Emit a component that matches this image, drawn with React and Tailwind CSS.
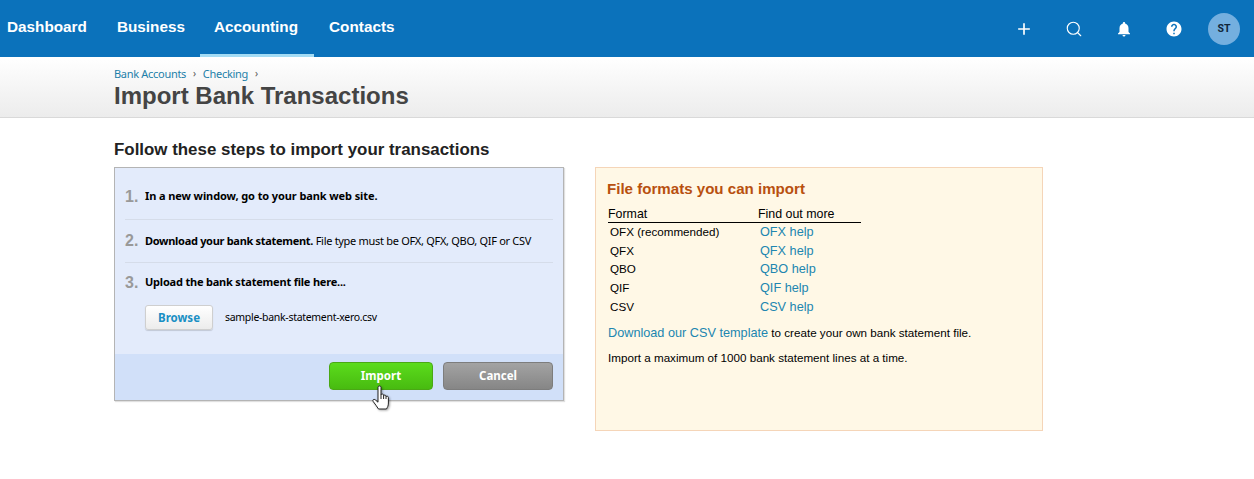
import React from 'react';
import { Search } from 'lucide-react';
import { MdAdd, MdNotifications, MdHelp } from 'react-icons/md';

const navItems = ['Dashboard', 'Business', 'Accounting', 'Contacts'];

const formats = [
  ['OFX (recommended)', 'OFX help'],
  ['QFX', 'QFX help'],
  ['QBO', 'QBO help'],
  ['QIF', 'QIF help'],
  ['CSV', 'CSV help'],
];

const arial = "font-['Liberation_Sans',Arial,sans-serif]";
const tahoma = "font-['Noto_Sans',Tahoma,sans-serif]";

function App() {
  return (
    <div className={`w-full min-h-[479px] bg-white overflow-hidden ${arial}`}>
      {/* Top nav */}
      <header className="h-[57px] bg-[#0b72bb] flex justify-between text-white">
        <nav className="flex pl-[7px] gap-[30px] text-[15.3px] font-bold">
          {navItems.map((item) => (
            <a
              key={item}
              className={
                item === 'Accounting'
                  ? 'h-[57px] -ml-[15px] -mr-[15px] pl-[14px] pr-[16px] pt-[18px] leading-[18px] border-b-[3px] border-[#a3dcf5]'
                  : 'h-[57px] pt-[18px] leading-[18px]'
              }
            >
              {item}
            </a>
          ))}
        </nav>
        <div className="flex items-center pr-[14px]">
          <MdAdd size={20} className="mr-[31px]" />
          <Search size={18} strokeWidth={1.5} className="mr-[32px]" />
          <MdNotifications size={18} className="mr-[32px]" />
          <MdHelp size={18} className="mr-[25px]" />
          <div className="w-8 h-8 rounded-full bg-[#74afdf] text-[#10263a] text-[10.5px] font-bold flex items-center justify-center font-['Roboto',sans-serif]">
            ST
          </div>
        </div>
      </header>

      {/* Page title */}
      <div className="h-[61px] pl-[114px] pt-[10px] bg-gradient-to-b from-white to-[#ececec] border-b border-[#d9d9d9]">
        <div className={`flex items-center text-[11px] leading-[13px] text-[#1d7fa9] ${tahoma} tracking-[-0.3px]`}>
          <a>Bank Accounts</a>
          <span className="mx-[7px] text-[#555] text-[10px]">›</span>
          <a>Checking</a>
          <span className="mx-[7px] text-[#555] text-[10px]">›</span>
        </div>
        <h1 className="mt-[2px] text-[24px] leading-[28px] font-bold text-[#444444]">Import Bank Transactions</h1>
      </div>

      <main className="pl-[114px] pt-[22px]">
        <h2 className="text-[16.9px] leading-[20px] font-bold text-[#222222] mb-[7px]">
          Follow these steps to import your transactions
        </h2>
        <div className="flex gap-[31px] items-start">
          {/* Steps panel */}
          <div className="relative w-[450px] h-[234px] border border-[#b4b4b4] bg-[#e3ebfb] shadow-[1px_1px_1px_rgba(0,0,0,0.12)] flex flex-col">
            <div className={`flex-1 px-[10px] ${tahoma} text-[11px] text-black`}>
              <div className="h-[52px] flex items-center border-b border-[#d5dce9] pt-[6px]">
                <span className={`w-[20px] text-[16px] font-bold text-[#999999] ${arial}`}>1.</span>
                <b className="tracking-[-0.1px]">In a new window, go to your bank web site.</b>
              </div>
              <div className="h-[43px] flex items-center border-b border-[#d5dce9]">
                <span className={`w-[20px] text-[16px] font-bold text-[#999999] ${arial}`}>2.</span>
                <span className="whitespace-nowrap tracking-[-0.3px]">
                  <b>Download your bank statement.</b> File type must be OFX, QFX, QBO, QIF or CSV
                </span>
              </div>
              <div className="h-[37px] flex items-center pt-[2px]">
                <span className={`w-[20px] text-[16px] font-bold text-[#999999] ${arial}`}>3.</span>
                <b className="tracking-[-0.2px]">Upload the bank statement file here...</b>
              </div>
              <div className="flex items-center pl-[20px] pt-[5px]">
                <button className="w-[68px] h-[25px] rounded-[3px] border border-[#cfcfcf] bg-gradient-to-b from-white to-[#ececec] text-[#1a8fc4] font-bold text-[11.5px] mr-[12px] shadow-[0_1px_1px_rgba(0,0,0,0.15)]">
                  Browse
                </button>
                <span className="text-[10.5px] tracking-[-0.3px]">sample-bank-statement-xero.csv</span>
              </div>
            </div>
            <div className={`h-[46px] pb-[2px] bg-[#d1e0f9] flex items-center justify-end pr-[10px] gap-[10px] ${tahoma} text-[11.5px] font-bold text-white`}>
              <button className="w-[104px] h-[28px] rounded-[4px] border border-[#4aa815] bg-gradient-to-b from-[#5bdc1c] to-[#48bb10]">
                Import
              </button>
              <button className="w-[110px] h-[28px] rounded-[4px] border border-[#7d7d7d] bg-gradient-to-b from-[#a3a3a3] to-[#868686]">
                Cancel
              </button>
            </div>
            {/* Mouse cursor from the capture */}
            <svg
              viewBox="0 0 18 25"
              className="absolute left-[257px] top-[217px] w-[18px] h-[25px] drop-shadow-[1px_1px_1px_rgba(0,0,0,0.35)]"
              fill="white"
              stroke="#222222"
              strokeWidth="1"
              strokeLinejoin="round"
            >
              <path d="M6 2.2C6 .6 9 .6 9 2.2V10C9 8.7 11.6 8.7 11.6 10.2V11C11.6 9.8 14 9.8 14 11.2V12C14 10.9 16.4 10.9 16.4 12.4V18C16.4 21 15.5 22 14.5 24H6.5C5 21.5 3 19 1.2 16.5C.2 15 1.8 13.6 3.2 14.8L6 17.2Z" />
              <path d="M9 10V14M11.6 11V14M14 12V14" fill="none" />
            </svg>
          </div>

          {/* File formats panel */}
          <div className="w-[448px] h-[264px] border border-[#f5d5b8] bg-[#fff8e6] pl-[12px] pt-[12px] text-[11.65px] leading-[18.7px] text-black">
            <h3 className="-ml-px text-[15.1px] leading-[18px] font-bold text-[#b8500f] mb-[10px]">File formats you can import</h3>
            <div className="w-[253px] flex border-b border-black leading-[13px] pb-[1px] text-[12.4px]">
              <span className="w-[150px]">Format</span>
              <span>Find out more</span>
            </div>
            {formats.map(([name, help]) => (
              <div key={name} className="flex pl-[2px]">
                <span className="w-[150px]">{name}</span>
                <a className="text-[#2186b0] text-[12.7px]">{help}</a>
              </div>
            ))}
            <p className="mt-[7px]">
              <a className="text-[#2186b0] text-[12.7px]">Download our CSV template</a> to create your own bank statement file.
            </p>
            <p className="mt-[7px]">Import a maximum of 1000 bank statement lines at a time.</p>
          </div>
        </div>
      </main>
    </div>
  );
}

export default App;
